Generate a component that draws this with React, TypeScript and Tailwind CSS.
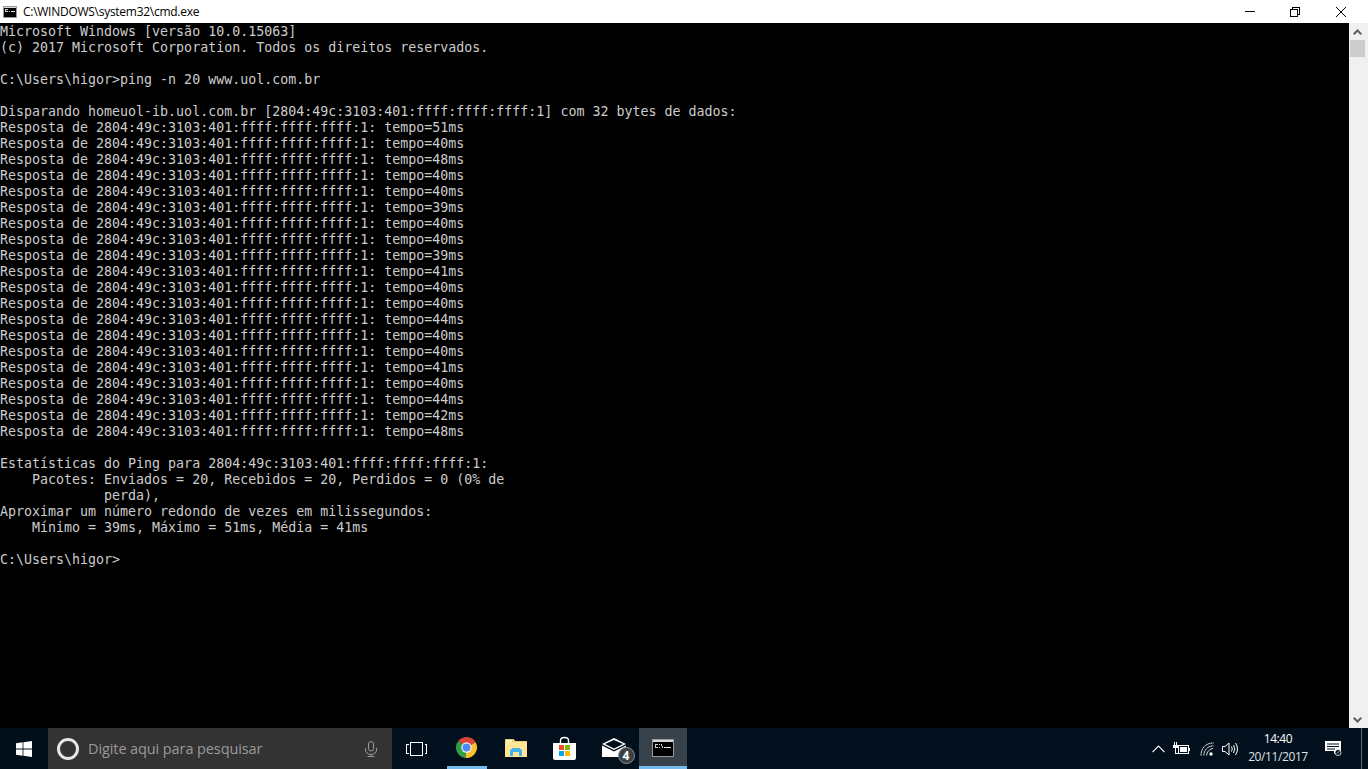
const times = [51, 40, 48, 40, 40, 39, 40, 40, 39, 41, 40, 40, 44, 40, 40, 41, 40, 44, 42, 48];

const lines: string[] = [
  "Microsoft Windows [versão 10.0.15063]",
  "(c) 2017 Microsoft Corporation. Todos os direitos reservados.",
  "",
  "C:\\Users\\higor>ping -n 20 www.uol.com.br",
  "",
  "Disparando homeuol-ib.uol.com.br [2804:49c:3103:401:ffff:ffff:ffff:1] com 32 bytes de dados:",
  ...times.map((t) => `Resposta de 2804:49c:3103:401:ffff:ffff:ffff:1: tempo=${t}ms`),
  "",
  "Estatísticas do Ping para 2804:49c:3103:401:ffff:ffff:ffff:1:",
  "    Pacotes: Enviados = 20, Recebidos = 20, Perdidos = 0 (0% de",
  "             perda),",
  "Aproximar um número redondo de vezes em milissegundos:",
  "    Mínimo = 39ms, Máximo = 51ms, Média = 41ms",
  "",
  "C:\\Users\\higor>",
];

function ConsoleIcon({ w, h }: { w: number; h: number }) {
  return (
    <svg width={w} height={h} viewBox="0 0 22 18" shapeRendering="crispEdges">
      <rect width="22" height="18" fill="#9a9a9a" />
      <rect x="1" y="1" width="20" height="2" fill="#d8d8d8" />
      <rect x="1" y="3" width="20" height="14" fill="#000" />
      <rect x="3" y="5" width="3" height="4" fill="#d0d0d0" />
      <rect x="4" y="6" width="2" height="2" fill="#000" />
      <rect x="7" y="5" width="1" height="1" fill="#d0d0d0" />
      <rect x="7" y="8" width="1" height="1" fill="#d0d0d0" />
      <rect x="9" y="5" width="1" height="2" fill="#d0d0d0" />
      <rect x="10" y="7" width="1" height="2" fill="#d0d0d0" />
      <rect x="12" y="8" width="7" height="1" fill="#e8e8e8" />
    </svg>
  );
}

function WindowsLogo() {
  return (
    <svg width="16" height="16" viewBox="0 0 16 16" fill="#fff">
      <polygon points="0,2.3 6.6,1.3 6.6,7.5 0,7.5" />
      <polygon points="7.4,1.2 16,0 16,7.5 7.4,7.5" />
      <polygon points="0,8.5 6.6,8.5 6.6,14.7 0,13.7" />
      <polygon points="7.4,8.5 16,8.5 16,16 7.4,14.8" />
    </svg>
  );
}

function ChromeIcon() {
  return (
    <svg width="23" height="23" viewBox="0 0 24 24">
      <path d="M12 12 L21.5 6.5 A11 11 0 0 0 3.3 5.3 Z" fill="#db4437" />
      <path d="M12 12 L21.5 6.5 A11 11 0 0 1 10.6 22.9 Z" fill="#fbc02d" />
      <path d="M12 12 L10.6 22.9 A11 11 0 0 1 3.3 5.3 Z" fill="#2f9e44" />
      <circle cx="12" cy="12" r="5.4" fill="#f5f5f5" />
      <circle cx="12" cy="12" r="4.2" fill="#4c8bf5" />
    </svg>
  );
}

function FolderIcon() {
  return (
    <svg width="22" height="19" viewBox="0 0 22 19" shapeRendering="crispEdges">
      <path d="M0 1 H8 L10 3 H22 V19 H0 Z" fill="#e8c978" />
      <rect x="1" y="2" width="6" height="2" fill="#fff3c0" />
      <rect x="0" y="4" width="22" height="15" fill="#ffe596" />
      <path d="M5 18 V13 L7 10 H15 L17 13 V18 H14 V14 H8 V18 Z" fill="#45b4ec" />
    </svg>
  );
}

function StoreIcon() {
  return (
    <svg width="23" height="24" viewBox="0 0 23 24">
      <path d="M7.5 8 V4.5 C7.5 0.5 15.5 0.5 15.5 4.5 V8" fill="none" stroke="#fff" strokeWidth="1.4" />
      <path d="M0 7 H23 V22 Q23 24 21 24 H2 Q0 24 0 22 Z" fill="#fff" />
      <rect x="6" y="9" width="5" height="5" fill="#f25022" />
      <rect x="12" y="9" width="5" height="5" fill="#7fba00" />
      <rect x="6" y="15" width="5" height="5" fill="#00a4ef" />
      <rect x="12" y="15" width="5" height="5" fill="#ffb900" />
    </svg>
  );
}

function MailIcon() {
  return (
    <svg width="24" height="19" viewBox="0 0 24 19">
      <path d="M0 6 L12 0 L24 6 L12 12 Z" fill="#fff" />
      <path d="M3 6 L12 2 L21 6 L12 10.5 Z" fill="#01101c" />
      <path d="M0 7.5 L12 13.5 L24 7.5 V19 H0 Z" fill="#fff" />
    </svg>
  );
}

function TaskView() {
  return (
    <svg width="21" height="14" viewBox="0 0 21 14" fill="none" stroke="#fff" strokeWidth="1" shapeRendering="crispEdges">
      <rect x="4.5" y="0.5" width="12" height="13" />
      <path d="M2.5 2.5 H0.5 V11.5 H2.5" />
      <path d="M18.5 2.5 H20.5 V11.5 H18.5" />
    </svg>
  );
}

function Mic() {
  return (
    <svg width="12" height="16" viewBox="0 0 12 16" fill="none" stroke="#9b9b9b" strokeWidth="1">
      <rect x="3.5" y="0.5" width="5" height="9.5" rx="2.5" />
      <path d="M0.5 7 V9 A5.5 4.5 0 0 0 11.5 9 V7" />
      <path d="M6 13.5 V15.5 M2.5 15.5 H9.5" />
    </svg>
  );
}

function TrayChevron() {
  return (
    <svg width="13" height="8" viewBox="0 0 13 8" fill="none" stroke="#fff" strokeWidth="1.1">
      <path d="M0.5 7.2 L6.5 1 L12.5 7.2" />
    </svg>
  );
}

function Battery() {
  return (
    <svg width="17" height="13" viewBox="0 0 17 13" fill="none" stroke="#fff" strokeWidth="1" shapeRendering="crispEdges">
      <path d="M1.5 0 V3 M3.5 0 V3" />
      <rect x="0" y="3" width="5" height="3" fill="#fff" stroke="none" />
      <path d="M2.5 6 V11.5 H5" />
      <rect x="5.5" y="3.5" width="10" height="8" />
      <rect x="7" y="5" width="7" height="5" fill="#fff" stroke="none" />
      <path d="M16.5 6 V9" />
    </svg>
  );
}

function Wifi() {
  return (
    <svg width="14" height="14" viewBox="0 0 14 14" fill="none" stroke="#e4e6e8" strokeWidth="1">
      <path d="M1 13.5 C1 6 6 1 13.5 1" strokeDasharray="2 0.4" />
      <path d="M3.8 13.5 C3.8 8 8 3.8 13.5 3.8" strokeDasharray="2 0.4" />
      <path d="M6.6 13.5 C6.6 10 10 6.6 13 6.6" />
      <circle cx="11" cy="12" r="1.7" fill="#fff" stroke="none" />
    </svg>
  );
}

function Speaker() {
  return (
    <svg width="17" height="14" viewBox="0 0 17 14" fill="none" stroke="#fff" strokeWidth="1">
      <path d="M0.5 4.5 H3 L7 1 V13 L3 9.5 H0.5 Z" />
      <path d="M9.5 4.5 Q11 7 9.5 9.5" />
      <path d="M11.5 3 Q14 7 11.5 11" />
      <path d="M13.5 1 Q17.5 7 13.5 13" />
    </svg>
  );
}

function ActionCenter() {
  return (
    <svg width="17" height="15" viewBox="0 0 17 15">
      <path d="M0 0 H16 V10 H12 L9 13 V10 H0 Z" fill="#fff" />
      <path d="M2 3 H14 M2 5.5 H14 M2 8 H10" stroke="#01101c" strokeWidth="1" />
      <circle cx="13" cy="11.5" r="3" fill="#01101c" stroke="#fff" strokeWidth="0.8" />
      <path d="M12 12.5 L14.2 10.2" stroke="#fff" strokeWidth="0.8" />
    </svg>
  );
}

function ScrollArrow({ up }: { up: boolean }) {
  return (
    <div className="h-[17px] w-[15px] flex items-center justify-center">
      <svg width="9" height="6" viewBox="0 0 9 6" fill="none" stroke="#606060" strokeWidth="2" className={up ? "" : "rotate-180"}>
        <path d="M0.7 5.3 L4.5 1.5 L8.3 5.3" />
      </svg>
    </div>
  );
}

function TaskButton({ children, running, nudge }: { children: React.ReactNode; running?: boolean; nudge?: boolean }) {
  return (
    <div className={`relative w-[49px] h-full flex items-center justify-center pb-[2px] ${nudge ? "pr-[2px]" : ""}`}>
      {children}
      {running && <div className="absolute bottom-0 left-[4px] w-[40px] h-[3px] bg-[#76b9ed]" />}
    </div>
  );
}

export default function App() {
  return (
    <div className="w-[1368px] h-[769px] flex flex-col overflow-hidden bg-black">
      <div className="h-[23px] shrink-0 bg-white flex items-center">
        <div className="w-[23px] shrink-0 flex justify-start pl-[3px]">
          <ConsoleIcon w={14} h={12} />
        </div>
        <span className="text-[12px] leading-[23px] text-black font-['Open_Sans',sans-serif] tracking-[-0.27px] whitespace-pre">
          C:\WINDOWS\system32\cmd.exe
        </span>
        <div className="ml-auto mr-[3px] flex h-full">
          <div className="w-[46px] flex items-center justify-center">
            <div className="w-[10px] h-[1px] bg-black" />
          </div>
          <div className="w-[44px] flex items-center justify-center">
            <svg width="10" height="10" viewBox="0 0 10 10" fill="none" stroke="#000" strokeWidth="1" shapeRendering="crispEdges">
              <rect x="0.5" y="2.5" width="7" height="7" />
              <path d="M2.5 2.5 V0.5 H9.5 V7.5 H7.5" />
            </svg>
          </div>
          <div className="w-[48px] flex items-center justify-center">
            <svg width="10" height="10" viewBox="0 0 10 10" fill="none" stroke="#000" strokeWidth="1">
              <path d="M0 0 L10 10 M10 0 L0 10" />
            </svg>
          </div>
        </div>
      </div>

      <div className="flex-1 min-h-0 flex">
        <div className="w-[1349px] bg-black overflow-hidden pt-[1px]">
          {lines.map((l, i) => (
            <div
              key={i}
              className="h-[16px] leading-[16px] text-[13.3px] text-[#cccccc] whitespace-pre font-['DejaVu_Sans_Mono',monospace]"
            >
              {l}
            </div>
          ))}
        </div>
        <div className="flex-1 bg-[#f0f0f0] pl-[1px] flex flex-col">
          <ScrollArrow up />
          <div className="w-[15px] h-[17px] bg-[#cdcdcd]" />
          <div className="flex-1" />
          <ScrollArrow up={false} />
        </div>
      </div>

      <div className="h-[41px] shrink-0 bg-[#01101c] flex items-stretch">
        <div className="w-[48px] flex items-center justify-center bg-[#000f1a]">
          <WindowsLogo />
        </div>
        <div className="w-[344px] bg-[#333333] flex items-center pl-[9px] pr-[15px]">
          <div className="w-[22px] h-[22px] rounded-full border-[3px] border-[#e6e6e6] shrink-0" />
          <span className="ml-[9px] text-[14.5px] text-[#9a9a9a] font-['Open_Sans',sans-serif] tracking-[-0.1px] whitespace-pre">
            Digite aqui para pesquisar
          </span>
          <div className="ml-auto flex">
            <Mic />
          </div>
        </div>
        <div className="w-[48px] flex items-center justify-center">
          <TaskView />
        </div>
        <div className="w-[3px]" />
        <TaskButton running nudge>
          <ChromeIcon />
        </TaskButton>
        <TaskButton nudge>
          <FolderIcon />
        </TaskButton>
        <TaskButton nudge>
          <StoreIcon />
        </TaskButton>
        <TaskButton nudge>
          <div className="relative flex">
            <MailIcon />
            <div className="absolute left-[16px] top-[9px] w-[17px] h-[17px] rounded-full bg-[#3b4045] border border-[#8a8f93] flex items-center justify-center text-[12px] leading-none font-bold text-white font-['Open_Sans',sans-serif]">
              4
            </div>
          </div>
        </TaskButton>
        <div className="relative w-[48px] bg-[#37424b] flex items-center justify-center pb-[2px]">
          <ConsoleIcon w={22} h={18} />
          <div className="absolute bottom-0 left-0 w-full h-[3px] bg-[#76b9ed]" />
        </div>

        <div className="flex-1" />

        <div className="flex items-center">
          <div className="w-[13px] flex mr-[8px]">
            <TrayChevron />
          </div>
          <div className="flex mr-[10px]">
            <Battery />
          </div>
          <div className="flex mr-[8px]">
            <Wifi />
          </div>
          <div className="flex mr-[3px]">
            <Speaker />
          </div>
          <div className="w-[72px] flex flex-col items-center text-white font-['Open_Sans',sans-serif] text-[12px] leading-[18px] tracking-[-0.4px] pb-[2px]">
            <span>14:40</span>
            <span className="text-[#dfe2e4]">20/11/2017</span>
          </div>
          <div className="flex ml-[11px] mr-[19px]">
            <ActionCenter />
          </div>
          <div className="w-[1px] h-full bg-[#5d6870]" />
          <div className="w-[6px]" />
        </div>
      </div>
    </div>
  );
}
